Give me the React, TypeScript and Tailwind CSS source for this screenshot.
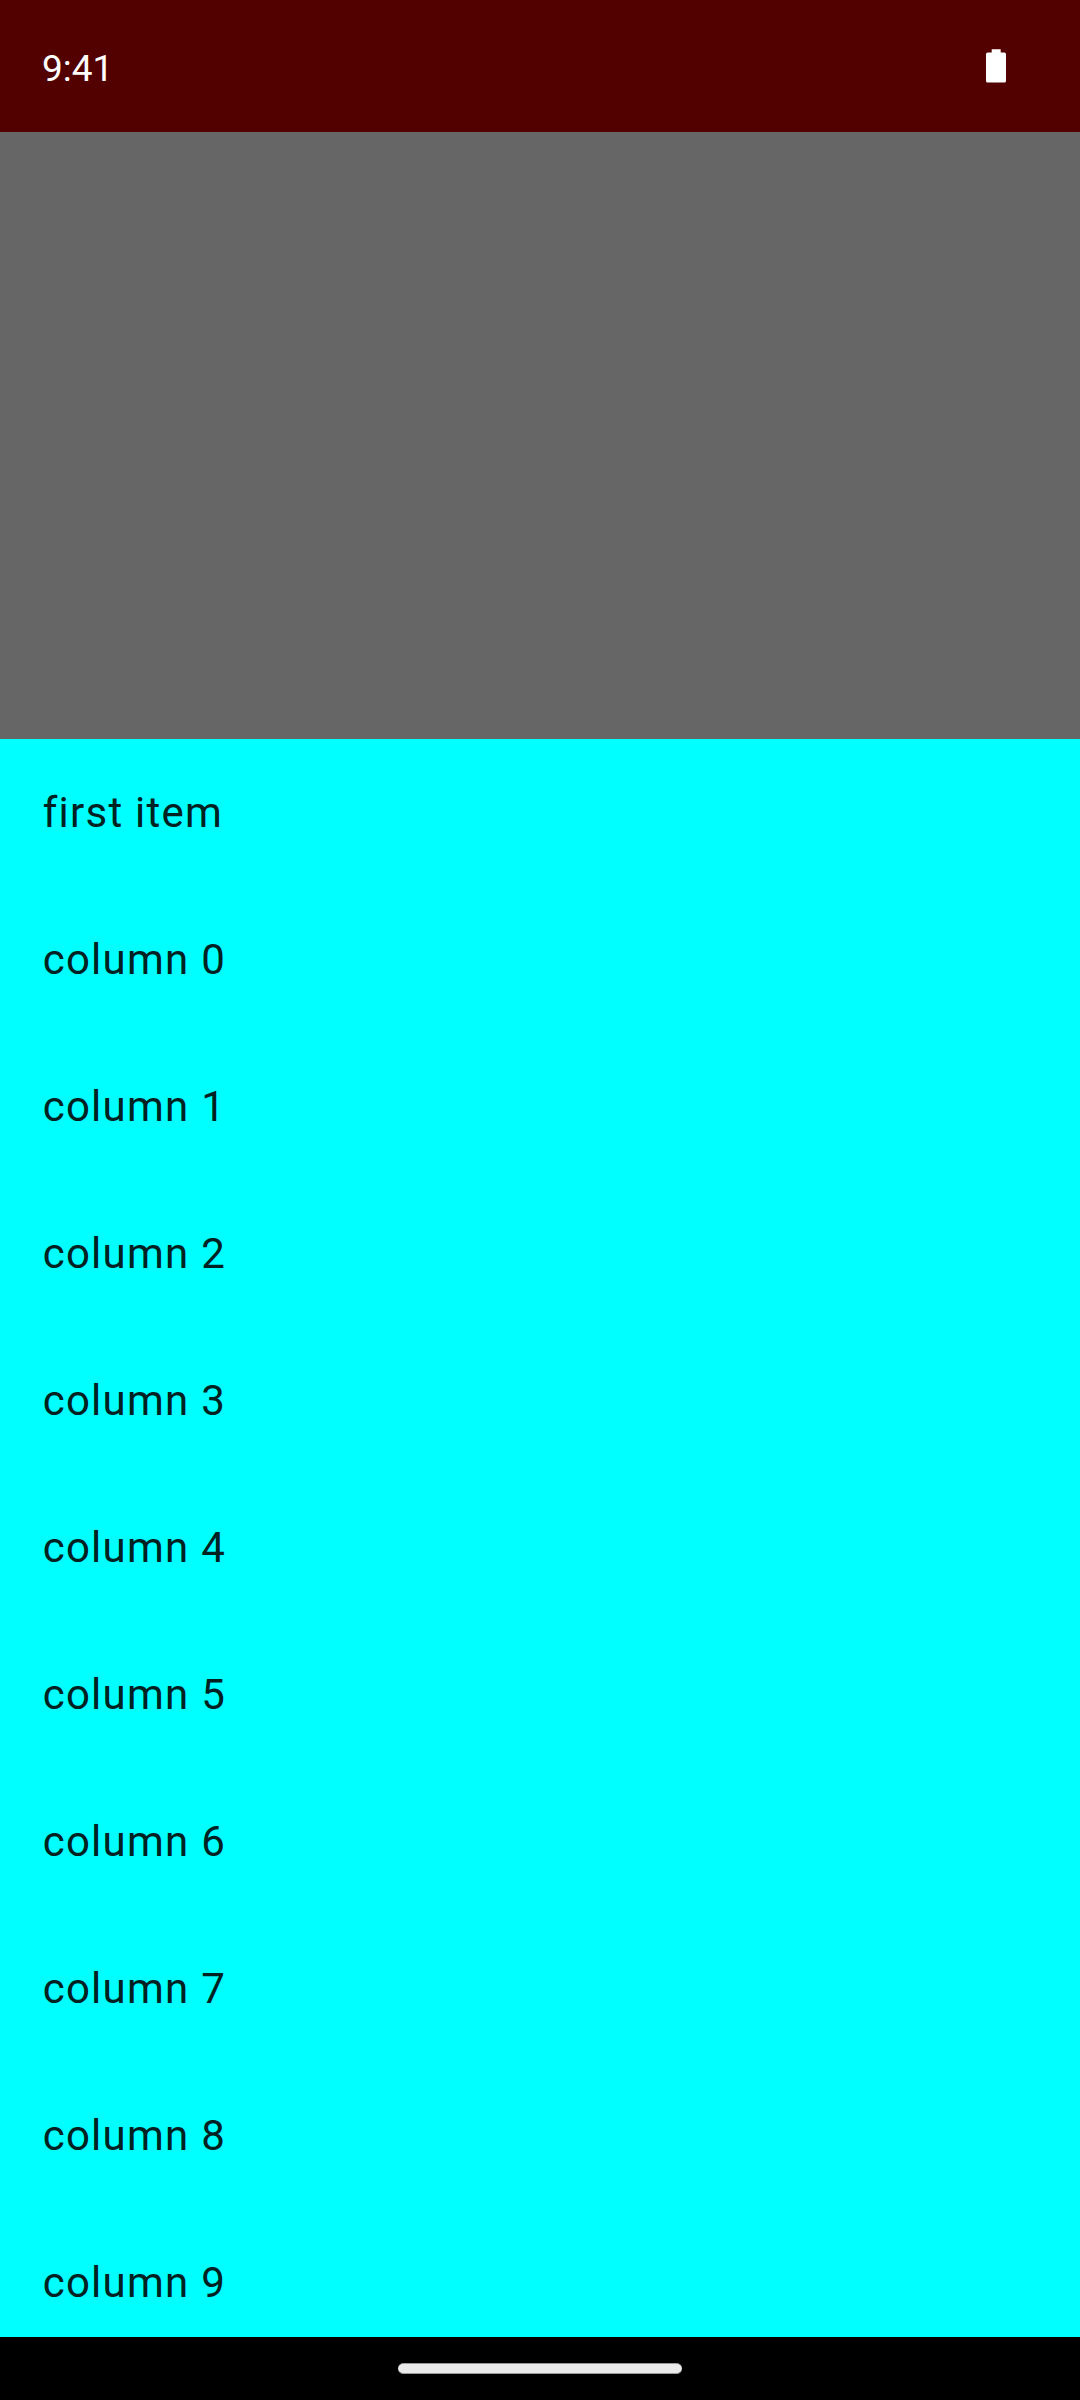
const items = ['first item', ...Array.from({ length: 10 }, (_, i) => `column ${i}`)];

export default function App() {
  return (
    <div className="flex h-[2400px] w-[1080px] flex-col overflow-hidden bg-[#666666] font-['Roboto',sans-serif]">
      <header className="flex h-[132px] shrink-0 items-center justify-between bg-[#520000] pr-[74px] pl-[42px] text-white">
        <span className="pt-1 text-[37px] leading-none">9:41</span>
        <svg width="20" height="34" viewBox="0 0 20 34" fill="currentColor">
          <path d="M5.7 0.3h9v3.1h3.6q1.7 0 1.7 1.7v26.8q0 1.7-1.7 1.7H1.7q-1.7 0-1.7-1.7V5.1q0-1.7 1.7-1.7h4z" />
        </svg>
      </header>
      <div className="h-[607px] shrink-0" />
      <main className="flex min-h-0 flex-1 flex-col overflow-hidden bg-[#00ffff]">
        {items.map((label) => (
          <div key={label} className="flex h-[147px] shrink-0 items-center px-[42.66px] text-[42px] leading-[63px] tracking-[1.25px] text-[#002121]">
            {label}
          </div>
        ))}
      </main>
      <footer className="flex h-[63px] shrink-0 items-start justify-center bg-black pt-[26px]">
        <div className="h-[11px] w-[284px] rounded-full border-y border-[#999999] bg-[#ebebeb]" />
      </footer>
    </div>
  );
}
